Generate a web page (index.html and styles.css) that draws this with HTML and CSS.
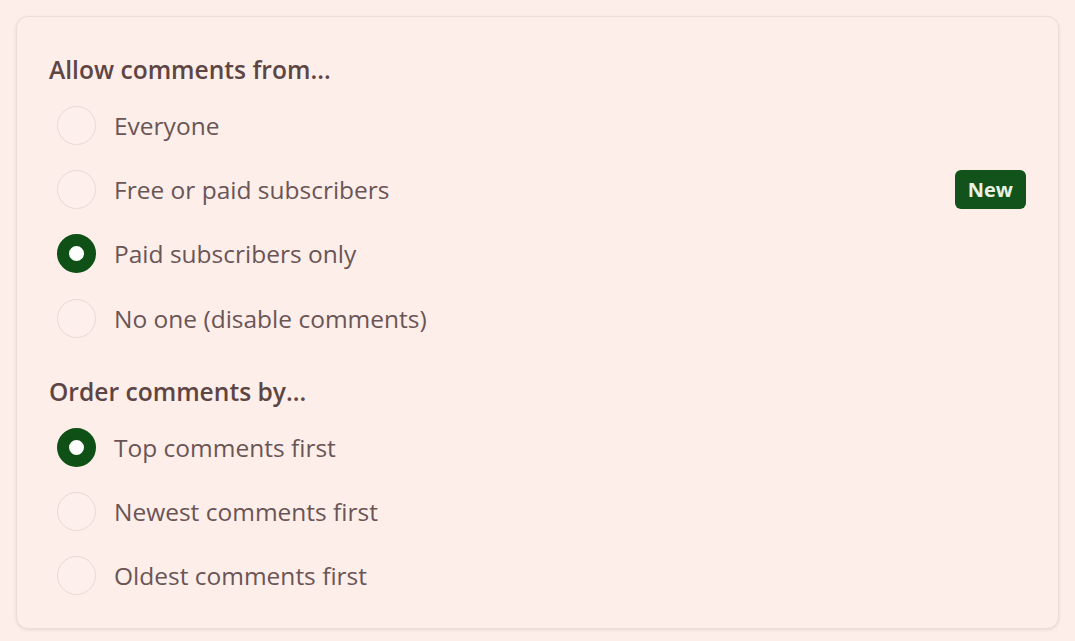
FILE: index.html
```html
<!DOCTYPE html>
<html lang="en">
<head>
    <meta charset="UTF-8">
    <title>Comment settings</title>
    <link rel="stylesheet" href="styles.css">
</head>
<body>
    <div class="card">
        <div class="group">
            <h3 class="group-title">Allow comments from...</h3>
            <label class="option">
                <span class="radio"></span>
                <span class="option-label">Everyone</span>
            </label>
            <label class="option">
                <span class="radio"></span>
                <span class="option-label">Free or paid subscribers</span>
                <span class="badge">New</span>
            </label>
            <label class="option">
                <span class="radio checked"></span>
                <span class="option-label">Paid subscribers only</span>
            </label>
            <label class="option">
                <span class="radio"></span>
                <span class="option-label">No one (disable comments)</span>
            </label>
        </div>

        <div class="group">
            <h3 class="group-title">Order comments by...</h3>
            <label class="option">
                <span class="radio checked"></span>
                <span class="option-label">Top comments first</span>
            </label>
            <label class="option">
                <span class="radio"></span>
                <span class="option-label">Newest comments first</span>
            </label>
            <label class="option">
                <span class="radio"></span>
                <span class="option-label">Oldest comments first</span>
            </label>
        </div>
    </div>
</body>
</html>
```

FILE: styles.css
```css
* {
    margin: 0;
    padding: 0;
    box-sizing: border-box;
}

body {
    font-family: 'Open Sans', 'Noto Sans', Arial, sans-serif;
    background: #fdeeea;
    color: #6a5556;
    padding: 16px;
}

.card {
    height: 613px;
    border: 1px solid #eddcd8;
    border-radius: 12px;
    background: #fdeeea;
    box-shadow: 0 1px 3px rgba(90, 50, 40, 0.12);
    padding: 37px 32px 0 32px;
}

.group {
    margin-bottom: 26px;
}

.group-title {
    font-size: 24.6px;
    font-weight: 600;
    color: #5d4544;
    line-height: 32px;
    margin-bottom: 7px;
}

.group + .group .group-title {
    margin-bottom: 7px;
}

.option {
    display: flex;
    align-items: center;
    height: 64.3px;
    padding-left: 8px;
    cursor: pointer;
}

.radio {
    width: 39px;
    height: 39px;
    border-radius: 50%;
    border: 1px solid #ead8d4;
    background: #fdefeb;
    flex-shrink: 0;
}

.radio.checked {
    border: 12px solid #0e5015;
    background: #fff;
}

.option-label {
    font-size: 24.5px;
    margin-left: 18px;
    flex: 1;
}

.badge {
    background: #11531a;
    color: #e8f2e4;
    font-size: 20px;
    font-weight: 700;
    border-radius: 6px;
    padding: 5px 13px;
    line-height: 29px;
}
```
